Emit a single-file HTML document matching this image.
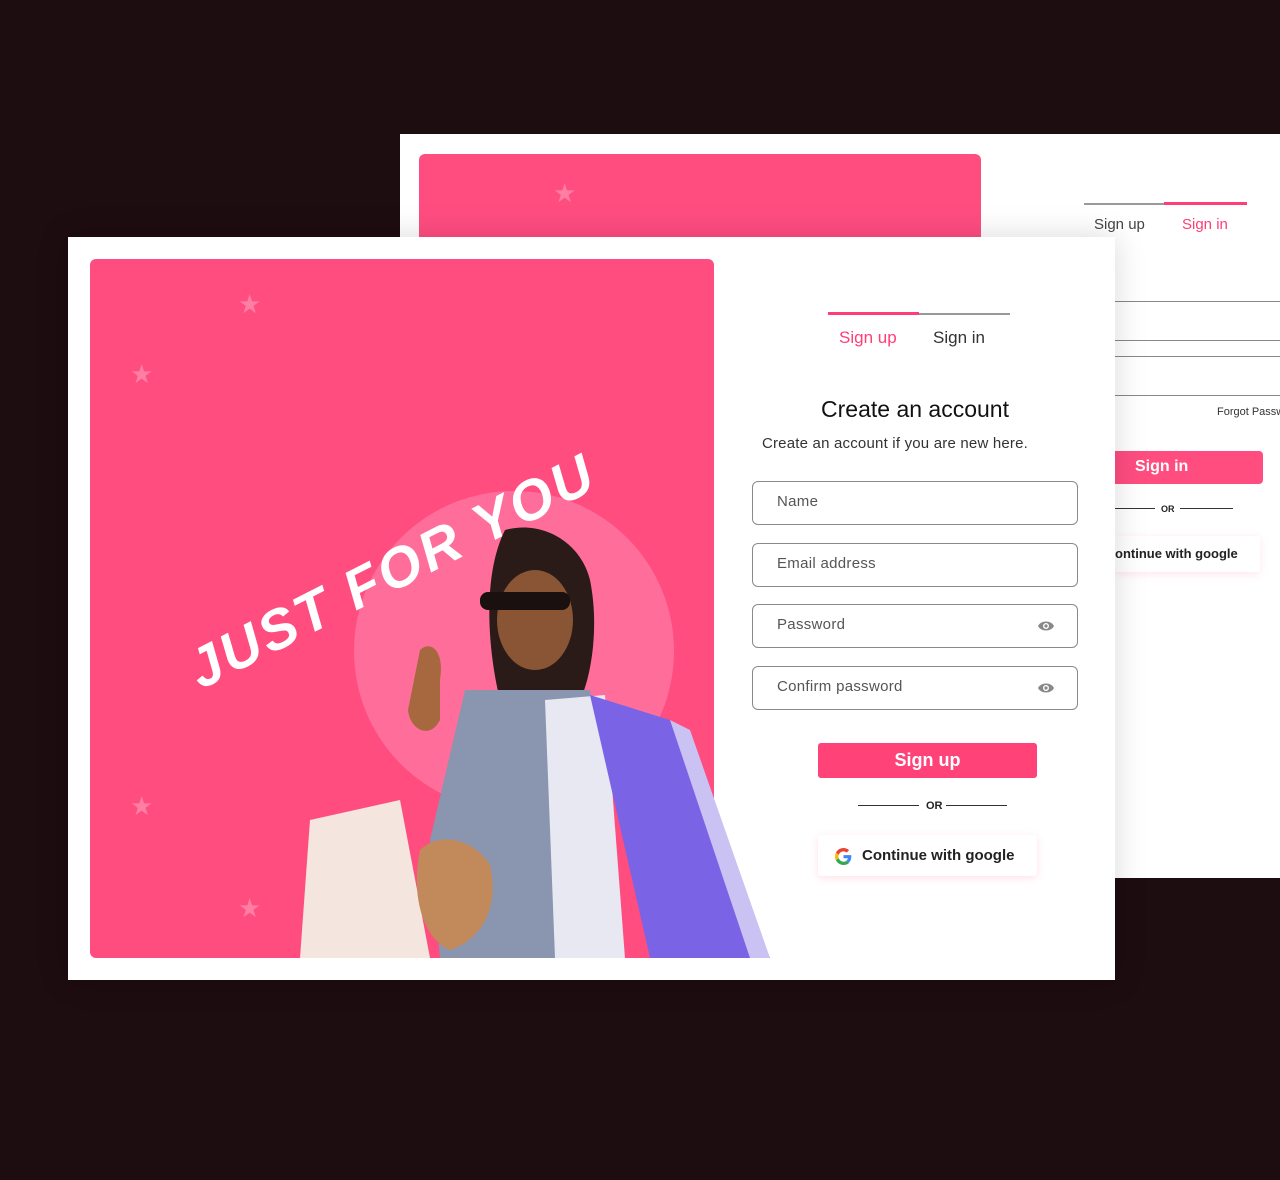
<!DOCTYPE html>
<html><head><meta charset="utf-8"><style>
*{margin:0;padding:0;box-sizing:border-box}
body{width:1280px;height:1180px;background:#1d0c10;position:relative;overflow:hidden;font-family:"Liberation Sans",sans-serif}
.abs{position:absolute}
.back{left:400px;top:134px;width:880px;height:744px;background:#fff}
.front{left:68px;top:237px;width:1047px;height:743px;background:#fff;box-shadow:0 0 30px rgba(0,0,0,.15)}
.pink{background:#ff4d80;border-radius:6px}
.inp{position:absolute;left:752px;width:326px;height:44px;border:1.3px solid #8a8a8a;border-radius:6px;font-size:15px;color:#555;padding:0 24px;line-height:40px;letter-spacing:.3px}
.eye{position:absolute;right:22px;top:15px}
.star{color:#ff7ea3;font-size:26px;position:absolute}
</style></head><body>
<div class="abs back"></div>
<div class="abs pink" style="left:419px;top:154px;width:562px;height:90px"></div>
<div class="star" style="left:553px;top:178px;">★</div>
<div class="abs" style="left:1084px;top:203px;width:82px;height:2px;background:#999"></div>
<div class="abs" style="left:1164px;top:202px;width:83px;height:3px;background:#ff3d77"></div>
<div class="abs" style="left:1094px;top:216px;font-size:15px;color:#444">Sign up</div>
<div class="abs" style="left:1182px;top:216px;font-size:15px;color:#ff3d77">Sign in</div>
<div class="abs" style="left:1115px;top:301px;width:165px;height:40px;border-top:1.3px solid #888;border-bottom:1.3px solid #888"></div>
<div class="abs" style="left:1115px;top:356px;width:165px;height:40px;border-top:1.3px solid #888;border-bottom:1.3px solid #888"></div>
<div class="abs" style="left:1217px;top:406px;font-size:11px;color:#333;white-space:nowrap">Forgot Passw</div>
<div class="abs" style="left:1115px;top:451px;width:148px;height:33px;background:#ff4d80;border-radius:0 4px 4px 0;color:#fff;font-size:16px;font-weight:bold;padding:7px 0 0 20px">Sign in</div>
<div class="abs" style="left:1115px;top:508px;width:40px;height:1px;background:#333"></div>
<div class="abs" style="left:1161px;top:504px;font-size:9px;color:#222;font-weight:bold">OR</div>
<div class="abs" style="left:1180px;top:508px;width:53px;height:1px;background:#333"></div>
<div class="abs" style="left:1115px;top:536px;width:145px;height:36px;background:#fff;box-shadow:0 2px 8px rgba(255,80,130,.15);font-size:13px;font-weight:bold;color:#222;padding:10px 0 0 0">ontinue with google</div>

<div class="abs front"></div>
<div class="abs pink" style="left:90px;top:259px;width:624px;height:699px;overflow:hidden">
<div class="star" style="left:148px;top:30px">★</div>
<div class="star" style="left:40px;top:100px">★</div>
<div class="star" style="left:40px;top:532px">★</div>
<div class="star" style="left:148px;top:634px">★</div>
<div class="abs" style="left:264px;top:232px;width:320px;height:320px;border-radius:50%;background:#ff6e9a"></div>
</div>
<div class="abs" style="left:192px;top:640px;transform:rotate(-27deg);transform-origin:left center;color:#fff;font-size:56px;font-weight:bold;font-style:italic;letter-spacing:3px;white-space:nowrap">JUST FOR YOU</div>
<svg class="abs" style="left:290px;top:520px" width="490" height="440" viewBox="0 0 490 440">
<path d="M215 10 C250 0 290 20 300 60 C310 110 300 160 290 180 L210 180 C200 140 190 60 215 10Z" fill="#2a1a18"/>
<ellipse cx="245" cy="100" rx="38" ry="50" fill="#8a5534"/>
<rect x="190" y="72" width="90" height="18" rx="8" fill="#1a1010"/>
<path d="M130 130 C140 120 155 130 150 160 L150 200 C140 220 120 210 118 190Z" fill="#a8683f"/>
<path d="M175 170 L300 170 L320 300 L300 438 L150 438 L140 320Z" fill="#8a95b0"/>
<path d="M20 300 L110 280 L140 438 L10 438Z" fill="#f4e6df"/>
<path d="M130 330 C150 310 185 320 200 345 C210 390 190 420 160 430 C135 420 120 380 130 330Z" fill="#c28a5a"/>
<path d="M255 180 L315 175 L335 438 L265 438Z" fill="#e7e8f2"/>
<path d="M300 175 L380 200 L480 438 L360 438Z" fill="#7b63e6"/>
<path d="M380 200 L400 210 L480 438 L460 438Z" fill="#c9c2f2"/>
</svg>

<div class="abs" style="left:828px;top:312px;width:91px;height:3px;background:#ff3d77"></div>
<div class="abs" style="left:919px;top:313px;width:91px;height:2px;background:#999"></div>
<div class="abs" style="left:839px;top:328px;font-size:17px;color:#ff3d77">Sign up</div>
<div class="abs" style="left:933px;top:328px;font-size:17px;color:#333">Sign in</div>
<div class="abs" style="left:752px;top:396px;width:326px;text-align:center;font-size:23px;color:#111">Create an account</div>
<div class="abs" style="left:752px;top:435px;width:286px;text-align:center;font-size:15px;color:#333;letter-spacing:.2px">Create an account if you are new here.</div>
<div class="inp" style="top:481px">Name</div>
<div class="inp" style="top:543px">Email address</div>
<div class="inp" style="top:604px">Password<svg class="eye" width="18" height="12" viewBox="0 0 18 12"><path d="M1 6C4 0 14 0 17 6C14 12 4 12 1 6Z" fill="#888"/><circle cx="9" cy="6" r="3" fill="#fff"/><circle cx="9" cy="6" r="1.6" fill="#888"/></svg></div>
<div class="inp" style="top:666px">Confirm password<svg class="eye" width="18" height="12" viewBox="0 0 18 12"><path d="M1 6C4 0 14 0 17 6C14 12 4 12 1 6Z" fill="#888"/><circle cx="9" cy="6" r="3" fill="#fff"/><circle cx="9" cy="6" r="1.6" fill="#888"/></svg></div>
<div class="abs" style="left:818px;top:743px;width:219px;height:35px;background:#ff4278;border-radius:3px;color:#fff;font-size:18px;font-weight:bold;text-align:center;line-height:35px">Sign up</div>
<div class="abs" style="left:858px;top:805px;width:61px;height:1px;background:#333"></div>
<div class="abs" style="left:926px;top:800px;font-size:11px;font-weight:bold;color:#222">OR</div>
<div class="abs" style="left:946px;top:805px;width:61px;height:1px;background:#333"></div>
<div class="abs" style="left:818px;top:835px;width:219px;height:41px;background:#fff;box-shadow:0 2px 8px rgba(255,80,130,.18);border-radius:3px;font-size:15px;font-weight:bold;color:#222;padding:12px 0 0 44px">Continue with google
<svg class="abs" style="left:17px;top:13px" width="17" height="17" viewBox="0 0 48 48"><path fill="#EA4335" d="M24 9.5c3.5 0 6.6 1.2 9 3.5l6.7-6.7C35.6 2.4 30.2 0 24 0 14.6 0 6.6 5.4 2.7 13.3l7.8 6C12.4 13.7 17.7 9.5 24 9.5z"/><path fill="#4285F4" d="M46.1 24.5c0-1.6-.1-3.1-.4-4.5H24v9h12.4c-.5 2.9-2.2 5.3-4.6 7l7.5 5.800c4.4-4 6.8-10 6.8-17.3z"/><path fill="#FBBC05" d="M10.5 28.7A14.5 14.5 0 0 1 9.5 24c0-1.6.3-3.2.8-4.7l-7.8-6A24 24 0 0 0 0 24c0 3.9.9 7.5 2.6 10.7l7.9-6z"/><path fill="#34A853" d="M24 48c6.5 0 11.9-2.1 15.8-5.8l-7.5-5.8c-2.1 1.4-4.8 2.3-8.3 2.3-6.3 0-11.6-4.2-13.5-10l-7.9 6C6.6 42.6 14.6 48 24 48z"/></svg></div>
</body></html>
